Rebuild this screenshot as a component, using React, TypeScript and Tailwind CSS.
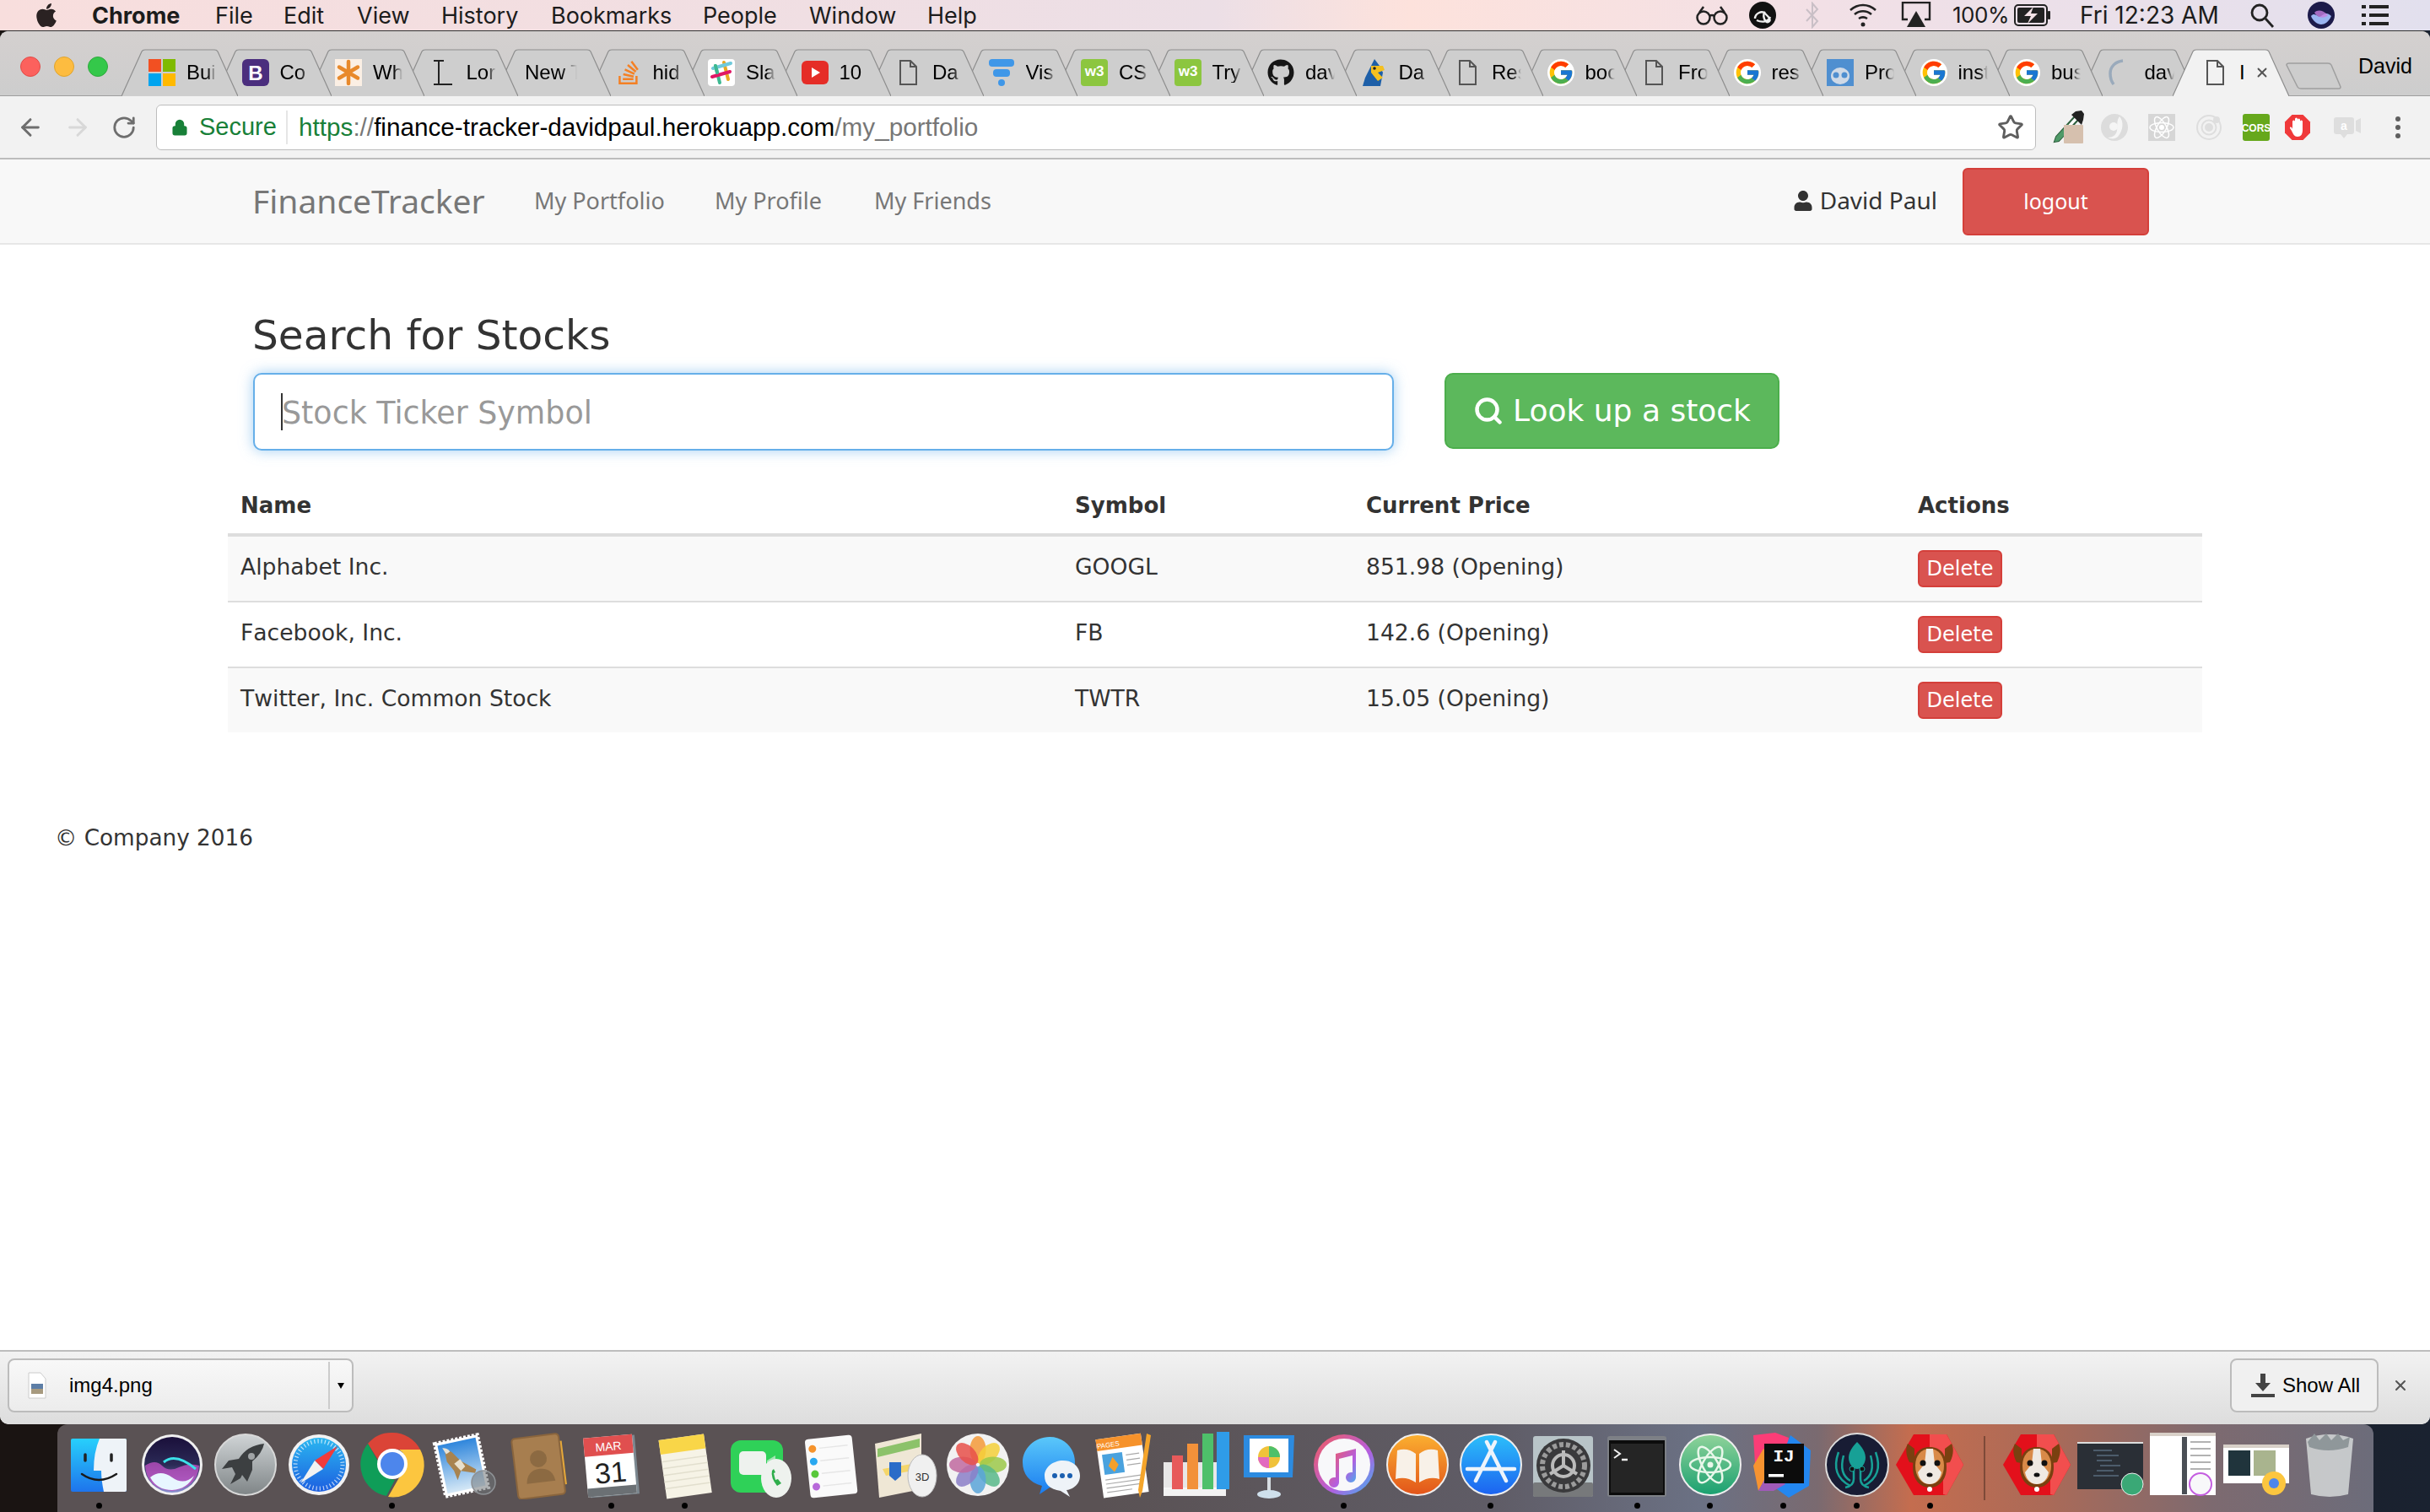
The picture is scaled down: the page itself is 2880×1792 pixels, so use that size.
import { Fragment, type ReactNode } from 'react';
import { ArrowLeft, ArrowRight, Lock, RotateCw, Search, Star, X } from 'lucide-react';
import { FaApple, FaGithub, FaStackOverflow, FaUser } from 'react-icons/fa';
import { FcGoogle } from 'react-icons/fc';

const sans = "[font-family:'Liberation_Sans',Arial,sans-serif]";
const page = "[font-family:'DejaVu_Sans',Verdana,sans-serif]";

const menus = [
  { label: 'File', cls: 'ml-[38px] w-[43px]' },
  { label: 'Edit', cls: 'ml-[38px] w-[49px]' },
  { label: 'View', cls: 'ml-[38px] w-[62px]' },
  { label: 'History', cls: 'ml-[38px] w-[92px]' },
  { label: 'Bookmarks', cls: 'ml-[38px] w-[142px]' },
  { label: 'People', cls: 'ml-[38px] w-[88px]' },
  { label: 'Window', cls: 'ml-[38px] w-[102px]' },
  { label: 'Help', cls: 'ml-[38px] w-[58px]' },
];

function MenuBar() {
  return (
    <div className="flex h-[36px] shrink-0 items-center bg-[linear-gradient(90deg,#f8dedd_0%,#ecdfe6_50%,#fde2dc_58%,#f2e0e6_75%,#e2e0ee_100%)] text-[#1c1c1c] text-[27px] leading-none [font-family:Inter,sans-serif]">
      <FaApple className="ml-[41px] h-[32px] w-[28px] text-[#2a2222]" />
      <span className="ml-[40px] w-[108px] font-bold whitespace-nowrap">Chrome</span>
      {menus.map((m) => (
        <span key={m.label} className={`${m.cls} whitespace-nowrap`}>{m.label}</span>
      ))}
      <div className="ml-auto mr-[49px] flex items-center">
        <svg width="38" height="24" viewBox="0 0 38 24" fill="none" stroke="#222" strokeWidth="2.5">
          <circle cx="9" cy="15" r="7.5" />
          <circle cx="29" cy="15" r="7.5" />
          <path d="M16 13q3-2 6 0M4 9 9 2M34 9 29 2" />
        </svg>
        <svg className="ml-[22px]" width="38" height="32" viewBox="0 0 38 32">
          <circle cx="19" cy="16" r="16" fill="#111" />
          <path d="M10 20c0-6 8-10 12-6s8 8 4 10-8-8-4-12M12 22c6 3 14 2 16-4" fill="none" stroke="#eee" strokeWidth="2.4" />
        </svg>
        <svg className="ml-[30px]" width="20" height="32" viewBox="0 0 20 32" fill="none" stroke="#c9bfc6" strokeWidth="2">
          <path d="M3 9l13 14-6 7V2l6 7L3 23" />
        </svg>
        <svg className="ml-[32px]" width="36" height="30" viewBox="0 0 36 30" fill="none" stroke="#222" strokeWidth="2.6">
          <path d="M3 9c9-8 21-8 30 0M8 14c6-5 14-5 20 0M13 19c3-2 7-2 10 0" />
          <circle cx="18" cy="26" r="2.5" fill="#222" stroke="none" />
        </svg>
        <svg className="ml-[27px]" width="36" height="32" viewBox="0 0 36 32">
          <path d="M8 21H2V1h32v20h-6" fill="none" stroke="#222" strokeWidth="2.4" />
          <path d="M18 11l11 19H7z" fill="#222" />
        </svg>
        <span className="ml-[25px] w-[62px] text-[26px] whitespace-nowrap tracking-[-0.5px]">100%</span>
        <svg className="ml-[11px]" width="44" height="26" viewBox="0 0 44 26">
          <rect x="1" y="1" width="38" height="24" rx="4" fill="none" stroke="#222" strokeWidth="2" />
          <rect x="4" y="4" width="32" height="18" rx="2" fill="#222" />
          <rect x="40" y="8" width="3" height="10" rx="1" fill="#222" />
          <path d="M23 3 12 14h8l-4 9 12-12h-8z" fill="#f3e2e6" />
        </svg>
        <span className="ml-[34px] w-[161px] text-[28px] whitespace-nowrap">Fri 12:23 AM</span>
        <svg className="ml-[40px]" width="30" height="30" viewBox="0 0 30 30" fill="none" stroke="#222" strokeWidth="2.8">
          <circle cx="12" cy="12" r="9" />
          <path d="M19 19l9 10" />
        </svg>
        <svg className="ml-[39px]" width="32" height="32" viewBox="0 0 32 32">
          <circle cx="16" cy="16" r="16" fill="#1c1a4a" />
          <path d="M4 17c5-6 8 3 12 0s7-5 12 0c-3 7-8 10-12 10S6 23 4 17z" fill="#9ab4f0" />
          <path d="M8 13c4-4 10-3 16 3-4 4-12 4-16-3z" fill="#c77fe0" opacity=".8" />
        </svg>
        <div className="ml-[32px] flex w-[32px] flex-col gap-[6px]">
          {[0, 1, 2].map((i) => (
            <div key={i} className="flex gap-[4px]">
              <div className="h-[4px] w-[5px] bg-[#222]" />
              <div className="h-[4px] flex-1 bg-[#222]" />
            </div>
          ))}
        </div>
      </div>
    </div>
  );
}

function DocIcon() {
  return (
    <svg width="21" height="30" viewBox="0 0 21 30" fill="none" stroke="#555" strokeWidth="2">
      <path d="M1 1h12l7 7v21H1zM13 1v7h7" />
    </svg>
  );
}

function W3Icon() {
  return (
    <svg width="32" height="32" viewBox="0 0 32 32">
      <rect width="32" height="32" rx="4" fill="#8cc63f" />
      <text x="16" y="20" textAnchor="middle" fontSize="17" fontWeight="700" fill="#fff" fontFamily="Liberation Sans">w3</text>
    </svg>
  );
}

const tabs: { label: string; icon?: ReactNode; wide?: boolean }[] = [
  {
    label: 'Bui',
    icon: (
      <svg width="32" height="32" viewBox="0 0 32 32">
        <rect width="15" height="15" fill="#f25022" />
        <rect x="17" width="15" height="15" fill="#7fba00" />
        <rect y="17" width="15" height="15" fill="#00a4ef" />
        <rect x="17" y="17" width="15" height="15" fill="#ffb900" />
      </svg>
    ),
  },
  {
    label: 'Co',
    icon: (
      <svg width="32" height="32" viewBox="0 0 32 32">
        <rect width="32" height="32" rx="6" fill="#4b2e7e" />
        <text x="16" y="25" textAnchor="middle" fontSize="24" fontWeight="700" fill="#fff" fontFamily="Liberation Sans">B</text>
      </svg>
    ),
  },
  {
    label: 'Wh',
    icon: (
      <svg width="32" height="32" viewBox="0 0 32 32">
        <rect width="32" height="32" fill="#fbefe4" />
        <path d="M16 3v26M5 9.500l22 13M27 9.500l-22 13" stroke="#e8892b" strokeWidth="4.500" strokeLinecap="round" />
      </svg>
    ),
  },
  {
    label: 'Lor',
    icon: (
      <svg width="32" height="32" viewBox="0 0 32 32" fill="none" stroke="#222" strokeWidth="2">
        <path d="M6 2h12M12 2v28M6 30h22" />
      </svg>
    ),
  },
  { label: 'New T', wide: true },
  { label: 'hid', icon: <FaStackOverflow className="h-[32px] w-[32px] text-[#f48024]" /> },
  {
    label: 'Sla',
    icon: (
      <svg width="32" height="32" viewBox="0 0 32 32">
        <rect width="32" height="32" rx="4" fill="#fff" />
        <g strokeWidth="4" strokeLinecap="round">
          <path d="M19 4l5 20" stroke="#e9a820" />
          <path d="M9 8l5 20" stroke="#3eb991" />
          <path d="M5 21l21-6" stroke="#e01765" />
          <path d="M6 11l21-6" stroke="#70cadb" />
          <path d="M9 8l2 8" stroke="#3eb991" />
        </g>
      </svg>
    ),
  },
  {
    label: '10',
    icon: (
      <svg width="32" height="32" viewBox="0 0 32 32">
        <rect y="2" width="32" height="28" rx="6" fill="#e52d27" />
        <path d="M12 10l10 6-10 6z" fill="#fff" />
      </svg>
    ),
  },
  { label: 'Da', icon: <DocIcon /> },
  {
    label: 'Vis',
    icon: (
      <svg width="32" height="32" viewBox="0 0 32 32" fill="#3f97e8">
        <rect x="1" width="30" height="9" rx="4" />
        <rect x="6" y="12" width="20" height="9" rx="4" />
        <rect x="12" y="24" width="8" height="8" rx="4" />
      </svg>
    ),
  },
  { label: 'CS', icon: <W3Icon /> },
  { label: 'Try', icon: <W3Icon /> },
  { label: 'dav', icon: <FaGithub className="h-[32px] w-[32px] text-[#161616]" /> },
  {
    label: 'Da',
    icon: (
      <svg width="32" height="32" viewBox="0 0 32 32">
        <path d="M16 0l6 8 4 8-3 16H2l3-10z" fill="#1d5fa8" />
        <path d="M12 8h14l2 5-8 3 6 6-6 4-8-10z" fill="#f4c020" />
        <circle cx="16" cy="11" r="1.800" fill="#222" />
      </svg>
    ),
  },
  { label: 'Res', icon: <DocIcon /> },
  { label: 'boo', icon: <FcGoogle className="h-[32px] w-[32px] rounded-full bg-white" /> },
  { label: 'Fro', icon: <DocIcon /> },
  { label: 'res', icon: <FcGoogle className="h-[32px] w-[32px] rounded-full bg-white" /> },
  {
    label: 'Pro',
    icon: (
      <svg width="32" height="32" viewBox="0 0 32 32">
        <rect width="32" height="32" fill="#4f8fd0" />
        <ellipse cx="16" cy="20" rx="11" ry="10" fill="#cfd9e6" />
        <circle cx="11" cy="19" r="3.500" fill="#4f8fd0" />
        <circle cx="21" cy="19" r="3.500" fill="#4f8fd0" />
      </svg>
    ),
  },
  { label: 'inst', icon: <FcGoogle className="h-[32px] w-[32px] rounded-full bg-white" /> },
  { label: 'bus', icon: <FcGoogle className="h-[32px] w-[32px] rounded-full bg-white" /> },
  {
    label: 'dav',
    icon: (
      <svg width="32" height="32" viewBox="0 0 32 32" fill="none" stroke="#9aaabb" strokeWidth="3.500">
        <path d="M19 2C10 3 4 9 4 17c0 5 1 9 4 13" />
      </svg>
    ),
  },
];

function TabShape({ active }: { active?: boolean }) {
  return (
    <svg className="absolute inset-0" width="138" height="56" viewBox="0 0 138 56">
      <path d="M0 56 24 3q1-2 4-2h82q3 0 4 2l24 53z" fill={active ? '#f2f2f2' : '#cecece'} stroke="none" />
      <path d="M0 56 24 3q1-2 4-2h82q3 0 4 2l24 53" fill="none" stroke="#8e8e8e" strokeWidth="1.200" />
    </svg>
  );
}

function TabStrip() {
  return (
    <div className="relative flex h-[77px] shrink-0 bg-[linear-gradient(180deg,#d4d0cf,#cdcdcd)]">
      <div className="absolute inset-x-0 bottom-0 h-px bg-[#9e9e9e]" />
      <div className="flex w-[144px] shrink-0 items-start gap-[16px] pl-[24px] pt-[30px]">
        <div className="h-[24px] w-[24px] rounded-full border border-[#e24b47] bg-[#fc615d]" />
        <div className="h-[24px] w-[24px] rounded-full border border-[#e0a42c] bg-[#fdbc40]" />
        <div className="h-[24px] w-[24px] rounded-full border border-[#2fa93d] bg-[#34c84a]" />
      </div>
      <div className={`flex items-end pt-[21px] ${sans}`}>
        {tabs.map((t, i) => (
          <div
            key={i}
            className={`relative h-[56px] w-[138px] shrink-0 ${i > 0 ? 'ml-[-27.5px]' : ''}`}
            style={{ zIndex: 40 - i }}
          >
            <TabShape />
            <div className={`relative flex h-[44px] items-center ${t.wide ? 'pl-[36px]' : 'pl-[32px]'} pt-[12px]`}>
              {t.icon && <div className="flex w-[45px] shrink-0 justify-center pr-[13px]">{t.icon}</div>}
              <span className={`whitespace-nowrap text-[24px] leading-none text-black [mask-image:linear-gradient(to_right,black_70%,transparent)] ${t.wide ? 'w-[62px]' : 'w-[35px]'}`}>
                {t.label}
              </span>
            </div>
          </div>
        ))}
        <div className="relative z-50 ml-[-27.5px] h-[56px] w-[140px] shrink-0">
          <TabShape active />
          <div className="relative flex h-[44px] items-center pl-[40px] pt-[12px]">
            <DocIcon />
            <span className="ml-[18px] w-[6px] text-[24px] leading-none text-black">I</span>
            <X className="ml-[12px] h-[18px] w-[18px] text-[#555]" strokeWidth={2.500} />
          </div>
        </div>
      </div>
      <svg className="ml-[-6px] mt-[37px] shrink-0" width="66" height="32" viewBox="0 0 66 32">
        <path d="M1 3q0-2 3-2h46q3 0 4 2l11 26q0 2-2 2H18q-3 0-4-2z" fill="#cdcdcd" stroke="#9f9f9f" strokeWidth="1.500" />
      </svg>
      <span className={`ml-[20px] mt-[29px] text-[25px] leading-none text-black ${sans}`}>David</span>
    </div>
  );
}

function Toolbar() {
  return (
    <div className="flex h-[75px] shrink-0 items-center border-b-2 border-[#bcbcbc] bg-[#f2f2f2]">
      <ArrowLeft className="ml-[20px] h-[32px] w-[32px] text-[#6e6e6e]" strokeWidth={2.200} />
      <ArrowRight className="ml-[24px] h-[32px] w-[32px] text-[#d8d8d8]" strokeWidth={2.200} />
      <RotateCw className="ml-[24px] h-[30px] w-[30px] text-[#6e6e6e]" strokeWidth={2.200} />
      <div className={`ml-[23px] flex h-[54px] w-[2228px] items-center rounded-[6px] border border-[#bdbdbd] bg-white text-[29px] leading-none ${sans}`}>
        <Lock className="ml-[17px] h-[24px] w-[20px] fill-[#188038] text-[#188038]" strokeWidth={2.500} />
        <span className="ml-[13px] w-[90px] text-[#188038]">Secure</span>
        <div className="ml-[13px] h-[40px] w-[2px] bg-[#e6e6e6]" />
        <span className="ml-[13px] whitespace-nowrap text-[29.700px]">
          <span className="text-[#188038]">https</span>
          <span className="text-[#777]">://</span>
          <span className="text-black">finance-tracker-davidpaul.herokuapp.com</span>
          <span className="text-[#777]">/my_portfolio</span>
        </span>
        <Star className="ml-auto mr-[13px] h-[32px] w-[32px] text-[#5e5e5e]" strokeWidth={2.200} />
      </div>
      <div className="ml-[20px] flex items-center">
        <svg width="40" height="42" viewBox="0 0 40 42">
          <path d="M26 8 4 32l-2 6 5-1L30 12z" fill="#fff" stroke="#2d5f3c" strokeWidth="2" />
          <path d="M18 17 4 32l-2 6 5-1 15-15z" fill="#4f9a68" />
          <path d="M22 6l12 12 2-6 1-7-3-4-7 1z" fill="#222" />
          <rect x="13" y="18" width="23" height="22" rx="1" fill="#d6c0ae" />
        </svg>
        <svg className="ml-[17px]" width="32" height="32" viewBox="0 0 32 32">
          <circle cx="16" cy="16" r="16" fill="#dcdcdc" />
          <path d="M22 3c5 5 5 16-2 24-3 3-8 3-12 1 6 0 10-3 11-8 1-6-1-12 3-17z" fill="#f5f5f5" />
          <circle cx="15" cy="15" r="5" fill="#f5f5f5" />
        </svg>
        <svg className="ml-[24px]" width="32" height="32" viewBox="0 0 32 32" fill="none" stroke="#fff" strokeWidth="1.500">
          <rect width="32" height="32" fill="#d6d6d6" stroke="none" />
          <ellipse cx="16" cy="16" rx="14" ry="5.500" />
          <ellipse cx="16" cy="16" rx="14" ry="5.500" transform="rotate(60 16 16)" />
          <ellipse cx="16" cy="16" rx="14" ry="5.500" transform="rotate(120 16 16)" />
          <circle cx="16" cy="16" r="3" fill="#fff" stroke="none" />
        </svg>
        <svg className="ml-[24px]" width="32" height="32" viewBox="0 0 32 32" fill="none" stroke="#dedede" strokeWidth="2">
          <circle cx="16" cy="16" r="14" />
          <circle cx="16" cy="16" r="8.500" />
          <circle cx="16" cy="16" r="4" fill="#dedede" />
          <circle cx="25" cy="7" r="3" fill="#dedede" />
        </svg>
        <svg className={`ml-[24px] ${sans}`} width="32" height="32" viewBox="0 0 32 32">
          <rect width="32" height="32" rx="3" fill="#66a81c" />
          <text x="16" y="21" textAnchor="middle" fontSize="12" fontWeight="700" fill="#fff">CORS</text>
        </svg>
        <svg className="ml-[17px]" width="32" height="32" viewBox="0 0 32 32">
          <path d="M9.500 1h13L31 9.500v13L22.500 31h-13L1 22.500v-13z" fill="#f0393a" />
          <path d="M10 17V9a1.500 1.500 0 0 1 3 0V6a1.500 1.500 0 0 1 3 0v1a1.500 1.500 0 0 1 3 0v2a1.500 1.500 0 0 1 3 0v10c0 5-2 8-6 8s-5-3-7-7l-2-3c0-2 2-2 3 1z" fill="#fff" />
        </svg>
        <svg className="ml-[27px]" width="32" height="32" viewBox="0 0 32 32">
          <rect y="4" width="24" height="20" rx="3" fill="#dedede" />
          <path d="M26 8l6-3v18l-6-3zM8 24h8l-4 5z" fill="#dedede" />
          <text x="12" y="19" textAnchor="middle" fontSize="14" fontWeight="700" fill="#fff" fontFamily="Liberation Sans">a</text>
        </svg>
        <div className="ml-[41px] flex w-[6px] flex-col gap-[4px]">
          <div className="h-[6px] w-[6px] rounded-full bg-[#5f5f5f]" />
          <div className="h-[6px] w-[6px] rounded-full bg-[#5f5f5f]" />
          <div className="h-[6px] w-[6px] rounded-full bg-[#5f5f5f]" />
        </div>
      </div>
    </div>
  );
}

function SiteNav() {
  return (
    <div className="flex h-[101px] shrink-0 items-center border-b-2 border-[#e7e7e7] bg-[#f8f8f8] pl-[299px] pr-[333px] text-[27px] leading-none text-[#777]">
      <span className="mb-[2px] w-[334px] text-[39px]">FinanceTracker</span>
      <span className="mb-[3px] w-[214px]">My Portfolio</span>
      <span className="mb-[3px] w-[189px]">My Profile</span>
      <span className="mb-[3px]">My Friends</span>
      <div className="ml-auto flex items-center text-[28px] text-[#333]">
        <FaUser className="mb-[2px] h-[24px] w-[22px] text-[#333]" />
        <span className="ml-[9px] mb-[4px]">David Paul</span>
        <button className="ml-[30px] h-[80px] w-[221px] rounded-[6px] border-2 border-[#d43f3a] bg-[#d9534f] text-[25px] text-white">logout</button>
      </div>
    </div>
  );
}

const stocks = [
  { name: 'Alphabet Inc.', symbol: 'GOOGL', price: '851.98 (Opening)', bg: 'bg-[#f9f9f9]' },
  { name: 'Facebook, Inc.', symbol: 'FB', price: '142.6 (Opening)', bg: 'bg-white' },
  { name: 'Twitter, Inc. Common Stock', symbol: 'TWTR', price: '15.05 (Opening)', bg: 'bg-[#f9f9f9]' },
];

function Portfolio() {
  return (
    <div className={`flex flex-1 flex-col bg-white pl-[270px] text-[26.600px] leading-[40px] text-[#333] ${page}`}>
      <h1 className="ml-[29px] mt-[82px] text-[48.600px] leading-[50px]">Search for Stocks</h1>
      <div className="mt-[20px] ml-[30px] flex items-start">
        <div className="relative h-[92px] w-[1352px]">
          <input
            placeholder="Stock Ticker Symbol"
            className="h-full w-full rounded-[10px] border-2 border-[#66afe9] bg-white pl-[32px] pt-[2px] text-[36.400px] text-[#555] shadow-[0_0_16px_rgba(102,175,233,0.6)] outline-none placeholder:text-[#999]"
          />
          <div className="absolute left-[33px] top-[24px] h-[44px] w-[2px] bg-[#333]" />
        </div>
        <button className="ml-[60px] flex h-[90px] w-[397px] items-center justify-center gap-[11px] rounded-[10px] border-2 border-[#4cae4c] bg-[#5cb85c] text-[36px] text-white">
          <Search className="h-[36px] w-[36px]" strokeWidth={3} />
          Look up a stock
        </button>
      </div>
      <table className="mt-[26px] w-[2340px] table-fixed border-collapse text-left">
        <colgroup>
          <col className="w-[989px]" />
          <col className="w-[345px]" />
          <col className="w-[654px]" />
          <col className="w-[352px]" />
        </colgroup>
        <thead>
          <tr className="border-b-4 border-[#ddd] text-[26px]">
            <th className="pb-[13px] pl-[15px] pr-[16px] pt-[19px] font-bold">Name</th>
            <th className="pb-[13px] pl-[15px] pr-[16px] pt-[19px] font-bold">Symbol</th>
            <th className="pb-[13px] pl-[15px] pr-[16px] pt-[19px] font-bold">Current Price</th>
            <th className="pb-[13px] pl-[15px] pr-[16px] pt-[19px] font-bold">Actions</th>
          </tr>
        </thead>
        <tbody className="[font-kerning:none]">
          {stocks.map((s, i) => (
            <tr key={s.symbol} className={`${s.bg} ${i < 2 ? 'border-b-2 border-[#ddd]' : ''}`}>
              <td className="py-[16px] pl-[15px] pr-[16px] align-top">{s.name}</td>
              <td className="py-[16px] pl-[15px] pr-[16px] align-top">{s.symbol}</td>
              <td className="py-[16px] pl-[15px] pr-[16px] align-top">{s.price}</td>
              <td className="py-[16px] pl-[15px] pr-[16px] align-top">
                <button className="block h-[44px] w-[100px] rounded-[6px] border-2 border-[#d43f3a] bg-[#d9534f] text-[24px] leading-none text-white">Delete</button>
              </td>
            </tr>
          ))}
        </tbody>
      </table>
      <p className="ml-[-205px] mt-[105px] text-[26.300px]">© Company 2016</p>
    </div>
  );
}

function DownloadBar() {
  return (
    <div className={`flex h-[88px] shrink-0 items-start rounded-b-[10px] border-t-2 border-[#bdbdbd] bg-[linear-gradient(180deg,#f2f2f2,#dddddd)] pt-[8px] text-black ${sans}`}>
      <div className="ml-[9px] flex h-[64px] w-[410px] items-center rounded-[8px] border-2 border-[#bcbcbc] bg-[linear-gradient(180deg,#f8f8f8,#ececec)]">
        <svg className="ml-[22px]" width="22" height="32" viewBox="0 0 22 32">
          <path d="M1 1h14l6 7v23H1z" fill="#fff" stroke="#ccc" />
          <rect x="4" y="14" width="14" height="12" fill="#5d7ea6" />
          <rect x="4" y="20" width="14" height="6" fill="#a79a7f" />
        </svg>
        <span className="ml-[27px] text-[24px] leading-none">img4.png</span>
        <div className="ml-auto flex h-[56px] items-center border-l-2 border-[#ccc] pl-[9px] pr-[9px]">
          <div className="h-0 w-0 border-x-[4px] border-t-[7px] border-x-transparent border-t-black" />
        </div>
      </div>
      <div className="ml-auto flex h-[64px] w-[176px] items-center rounded-[8px] border-2 border-[#bcbcbc] bg-[#f0f0f0]">
        <svg className="ml-[23px]" width="28" height="28" viewBox="0 0 28 28" fill="#444">
          <path d="M11 0h6v11h6l-9 10-9-10h6zM0 24h28v4H0z" />
        </svg>
        <span className="ml-[9px] whitespace-nowrap text-[24px] leading-none">Show All</span>
      </div>
      <X className="ml-[16px] mr-[25px] mt-[22px] h-[20px] w-[20px] text-[#555]" strokeWidth={2.500} />
    </div>
  );
}

/* dock icons, all drawn in an 80x80 box */
function Ic({ children }: { children: ReactNode }) {
  return <svg width="80" height="80" viewBox="0 0 80 80">{children}</svg>;
}

const dockApps: { name: string; running?: boolean; icon: ReactNode }[] = [
  {
    name: 'finder',
    running: true,
    icon: (
      <Ic>
        <defs>
          <linearGradient id="fnd" x1="0" y1="0" x2="0" y2="1">
            <stop offset="0" stopColor="#27d0fc" />
            <stop offset="1" stopColor="#1e74ec" />
          </linearGradient>
        </defs>
        <rect x="7" y="8" width="66" height="63" rx="2" fill="url(#fnd)" />
        <path d="M41 8h30q2 0 2 2v59q0 2-2 2H46q-3-14-3-25H34Q34 24 41 8z" fill="#eef3f8" />
        <path d="M24 27v7M55 27v7" stroke="#222" strokeWidth="3.500" strokeLinecap="round" />
        <path d="M20 50q20 14 41 0" fill="none" stroke="#1a1a1a" strokeWidth="2.500" strokeLinecap="round" />
      </Ic>
    ),
  },
  {
    name: 'siri',
    icon: (
      <Ic>
        <defs>
          <linearGradient id="sir" x1="0" y1="0" x2="0" y2="1">
            <stop offset="0" stopColor="#1a0f3a" />
            <stop offset=".5" stopColor="#2b2a56" />
            <stop offset="1" stopColor="#8a90d0" />
          </linearGradient>
        </defs>
        <circle cx="40" cy="39" r="36" fill="#f0f0f0" />
        <circle cx="40" cy="39" r="33" fill="url(#sir)" />
        <path d="M8 40q12-8 20 0t20 2 24-2q-2 26-32 30Q10 68 8 40z" fill="#c653c8" opacity=".75" />
        <path d="M14 54q12-10 26 0t26-2q-8 16-26 17-18 0-26-15z" fill="#e8f6ff" />
        <path d="M30 36q14-12 38 8" fill="none" stroke="#3ce0e8" strokeWidth="3" />
      </Ic>
    ),
  },
  {
    name: 'launchpad',
    icon: (
      <Ic>
        <defs>
          <linearGradient id="lpd" x1="0" y1="0" x2="0" y2="1">
            <stop offset="0" stopColor="#d0d4d6" />
            <stop offset="1" stopColor="#7f8587" />
          </linearGradient>
        </defs>
        <circle cx="40" cy="39" r="36" fill="url(#lpd)" stroke="#d8d8d8" strokeWidth="2" />
        <path d="M62 14q-20 2-30 18l-12 2-8 10 12-2 4 8-6 12 12-7 2-4 6 8 6-14 0-10q12-10 14-21z" fill="#3c3f41" />
        <circle cx="47" cy="29" r="4" fill="#a0a4a6" />
      </Ic>
    ),
  },
  {
    name: 'safari',
    icon: (
      <Ic>
        <defs>
          <linearGradient id="saf" x1="0" y1="0" x2="0" y2="1">
            <stop offset="0" stopColor="#2bb6f0" />
            <stop offset="1" stopColor="#1c5fe0" />
          </linearGradient>
        </defs>
        <circle cx="40" cy="39" r="36" fill="#f2f2f2" />
        <circle cx="40" cy="39" r="32" fill="url(#saf)" />
        <circle cx="40" cy="39" r="28" fill="none" stroke="#fff" strokeWidth="5" strokeDasharray="1.200 3" opacity=".7" />
        <path d="M62 17 45 44 35 34z" fill="#f03b3b" />
        <path d="M18 61 45 44 35 34z" fill="#f2f2f2" />
      </Ic>
    ),
  },
  {
    name: 'chrome',
    running: true,
    icon: (
      <Ic>
        <path d="M40 1a37 38 0 0 1 33 20H40a18 18 0 0 0-17 12L11 14A37 38 0 0 1 40 1z" fill="#db4437" />
        <path d="M11 14l17 30a18 18 0 0 0 15 13L33 76A37 38 0 0 1 11 14z" fill="#0f9d58" />
        <path d="M73 21a37 38 0 0 1-38 56l16-28a18 18 0 0 0-3-28z" fill="#fcc63f" />
        <circle cx="40" cy="38" r="18" fill="#fff" />
        <circle cx="40" cy="38" r="14" fill="#4d86ec" />
      </Ic>
    ),
  },
  {
    name: 'mail',
    icon: (
      <Ic>
        <defs>
          <linearGradient id="sky" x1="0" y1="0" x2="0" y2="1">
            <stop offset="0" stopColor="#2f86dc" />
            <stop offset="1" stopColor="#d5e8f6" />
          </linearGradient>
        </defs>
        <g transform="rotate(-12 36 40)">
          <rect x="10" y="8" width="52" height="64" fill="#fff" stroke="#fff" strokeWidth="4" strokeDasharray="3 2" />
          <rect x="13" y="11" width="46" height="58" fill="url(#sky)" />
          <path d="M20 16l8 6 8 12 16 14-2 4-16-6-6 10-2-12-6-12z" fill="#a8834f" />
          <path d="M18 15q6 1 8 6l-5 2z" fill="#e6e2d6" />
          <path d="M28 36l8-4 4 10-6 4z" fill="#e8e0cc" />
        </g>
        <circle cx="62" cy="60" r="14" fill="#6f7478" fillOpacity=".55" stroke="#8e9296" strokeWidth="1.500" />
      </Ic>
    ),
  },
  {
    name: 'contacts',
    icon: (
      <Ic>
        <g transform="rotate(-7 40 40)">
          <rect x="66" y="14" width="5" height="52" fill="#e5a83a" />
          <rect x="12" y="5" width="56" height="72" rx="4" fill="#a77e4f" stroke="#8a653d" strokeWidth="2" />
          <circle cx="41" cy="32" r="10" fill="#8c6a42" />
          <path d="M24 60q2-16 17-16t17 16z" fill="#8c6a42" />
        </g>
      </Ic>
    ),
  },
  {
    name: 'calendar',
    running: true,
    icon: (
      <Ic>
        <g transform="rotate(-5 40 40)">
          <rect x="12" y="6" width="58" height="70" fill="#7c8890" />
          <rect x="9" y="5" width="58" height="70" fill="#fff" />
          <rect x="9" y="5" width="58" height="22" fill="#e04f4f" />
          <rect x="9" y="65" width="58" height="10" fill="#6b7074" />
          <text x="38" y="22" textAnchor="middle" fontSize="14" fill="#fff" fontFamily="Liberation Sans">MAR</text>
          <text x="38" y="60" textAnchor="middle" fontSize="34" fill="#222" fontFamily="Liberation Sans">31</text>
        </g>
      </Ic>
    ),
  },
  {
    name: 'notes',
    running: true,
    icon: (
      <Ic>
        <g transform="rotate(-8 40 40)">
          <rect x="13" y="6" width="54" height="70" fill="#f6f3e6" />
          <rect x="13" y="6" width="54" height="17" fill="#f9d648" />
          <path d="M13 32h54M13 40h54M13 48h54M13 56h54M13 64h54" stroke="#e2dfce" strokeWidth="1.500" />
        </g>
      </Ic>
    ),
  },
  {
    name: 'facetime',
    icon: (
      <Ic>
        <rect x="7" y="10" width="62" height="62" rx="12" fill="#2fd158" />
        <rect x="17" y="23" width="32" height="28" rx="5" fill="#eef2ee" />
        <path d="M50 34l10-6v18l-10-6z" fill="#eef2ee" opacity=".6" />
        <ellipse cx="61" cy="55" rx="18" ry="23" fill="#eef2ee" />
        <path d="M56 46q-2 8 6 18l5-3-4-5-3 1-2-8 2-1-2-4z" fill="#2fae4c" />
      </Ic>
    ),
  },
  {
    name: 'reminders',
    icon: (
      <Ic>
        <g transform="rotate(-6 40 40)">
          <rect x="12" y="6" width="56" height="70" rx="4" fill="#fafafa" />
          <path d="M28 18h34M28 33h34M28 48h34M28 63h34" stroke="#e6e6e6" strokeWidth="1.500" />
          <circle cx="20" cy="18" r="4.500" fill="#f5932c" />
          <circle cx="20" cy="33" r="4.500" fill="#29a8f0" />
          <circle cx="20" cy="48" r="4.500" fill="#59c83b" />
          <circle cx="20" cy="63" r="4.500" fill="#b769d9" />
        </g>
      </Ic>
    ),
  },
  {
    name: 'maps',
    icon: (
      <Ic>
        <path d="M5 14 60 2v66L10 78z" fill="#efe7d5" />
        <path d="M8 20 58 8v10L8 30z" fill="#8cc26a" />
        <path d="M14 44l46-8v8L18 52z" fill="#f5d66a" />
        <path d="M22 36h14v16l-7 6-7-6z" fill="#2a6cc8" />
        <ellipse cx="61" cy="52" rx="17" ry="25" fill="#f0f0f0" stroke="#bbb" />
        <text x="61" y="58" textAnchor="middle" fontSize="13" fill="#333" fontFamily="Liberation Sans">3D</text>
      </Ic>
    ),
  },
  {
    name: 'photos',
    icon: (
      <Ic>
        <circle cx="40" cy="39" r="37" fill="#f2f2f2" />
        {[
          ['#f49a3a', 0], ['#f4d03a', 45], ['#9cc94a', 90], ['#58b88a', 135],
          ['#5aa4d8', 180], ['#8b7fc8', 225], ['#c16aa0', 270], ['#e8504a', 315],
        ].map(([c, a]) => (
          <ellipse key={String(a)} cx="40" cy="21" rx="9.500" ry="16" fill={String(c)} opacity=".85" transform={`rotate(${a} 40 39)`} />
        ))}
      </Ic>
    ),
  },
  {
    name: 'messages',
    icon: (
      <Ic>
        <defs>
          <linearGradient id="msg" x1="0" y1="0" x2="0" y2="1">
            <stop offset="0" stopColor="#5ac8fa" />
            <stop offset="1" stopColor="#1a7cf0" />
          </linearGradient>
        </defs>
        <path d="M38 6c18 0 30 14 30 30S56 66 38 66l-12 8 3-10C14 60 6 50 6 36 6 20 20 6 38 6z" fill="url(#msg)" />
        <path d="M54 34c12 0 20 8 20 18s-8 16-16 17l4 8-11-7C38 68 32 62 32 52c0-10 10-18 22-18z" fill="#eef3f8" />
        <circle cx="44" cy="52" r="3" fill="#1a5fb0" />
        <circle cx="53" cy="52" r="3" fill="#1a5fb0" />
        <circle cx="62" cy="52" r="3" fill="#1a5fb0" />
      </Ic>
    ),
  },
  {
    name: 'pages',
    icon: (
      <Ic>
        <g transform="rotate(-8 38 40)">
          <rect x="10" y="5" width="54" height="70" fill="#fff" />
          <rect x="10" y="5" width="54" height="14" fill="#f6922b" />
          <text x="24" y="16" textAnchor="middle" fontSize="8" fill="#fff" fontFamily="Liberation Sans">PAGES</text>
          <rect x="15" y="24" width="24" height="24" fill="#4aa2de" />
          <path d="M27 28l6 10-6 8-6-8z" fill="#f6a02b" />
          <path d="M15 54h44M15 59h44M15 64h44M15 69h30M43 28h16M43 34h16M43 40h16" stroke="#aaa" strokeWidth="1.200" />
        </g>
        <path d="M66 2l5 2-10 66-3 8-2-9z" fill="#f5a52b" />
      </Ic>
    ),
  },
  {
    name: 'numbers',
    icon: (
      <Ic>
        <path d="M0 66h74v10H0z" fill="#f2f2f2" />
        <path d="M0 36h74v32H0z" fill="#f7f7f7" opacity=".9" />
        <rect x="10" y="28" width="13" height="40" fill="#e75a5a" />
        <rect x="28" y="14" width="13" height="54" fill="#f2913a" />
        <rect x="46" y="2" width="13" height="66" fill="#4ec06a" />
        <rect x="63" y="0" width="15" height="68" fill="#2f9ce8" />
      </Ic>
    ),
  },
  {
    name: 'keynote',
    icon: (
      <Ic>
        <path d="M38 52v20" stroke="#d7dde2" strokeWidth="4" />
        <ellipse cx="38" cy="74" rx="14" ry="5" fill="#cfe0ec" />
        <path d="M8 4h60l-2 50H8z" fill="#2c8be0" />
        <rect x="15" y="8" width="46" height="40" fill="#fff" />
        <circle cx="38" cy="30" r="13" fill="#f0c23a" />
        <path d="M38 30V17a13 13 0 0 1 13 13z" fill="#4ec06a" />
        <path d="M38 30H25a13 13 0 0 0 13 13z" fill="#e26ac0" />
      </Ic>
    ),
  },
  {
    name: 'itunes',
    running: true,
    icon: (
      <Ic>
        <defs>
          <linearGradient id="itn" x1="0" y1="0" x2="1" y2="1">
            <stop offset="0" stopColor="#f45b5b" />
            <stop offset=".6" stopColor="#b45ee0" />
            <stop offset="1" stopColor="#38b8f0" />
          </linearGradient>
        </defs>
        <circle cx="40" cy="39" r="36" fill="url(#itn)" />
        <circle cx="40" cy="39" r="31" fill="#f8f8fa" />
        <path d="M30 26l24-6v34a6 6 0 1 1-6-6h2V28l-16 4v28a6 6 0 1 1-6-6h2z" fill="url(#itn)" />
      </Ic>
    ),
  },
  {
    name: 'books',
    icon: (
      <Ic>
        <defs>
          <linearGradient id="bks" x1="0" y1="0" x2="0" y2="1">
            <stop offset="0" stopColor="#fbb030" />
            <stop offset="1" stopColor="#e2541a" />
          </linearGradient>
        </defs>
        <circle cx="40" cy="39" r="36" fill="url(#bks)" stroke="#eee" strokeWidth="2" />
        <path d="M38 26q-10-8-22-4l-2 34q12-4 24 4zM42 26q10-8 22-4l2 34q-12-4-24 4z" fill="#f8f1e8" />
      </Ic>
    ),
  },
  {
    name: 'appstore',
    running: true,
    icon: (
      <Ic>
        <defs>
          <linearGradient id="aps" x1="0" y1="0" x2="0" y2="1">
            <stop offset="0" stopColor="#2cc0fa" />
            <stop offset="1" stopColor="#1c62f0" />
          </linearGradient>
        </defs>
        <circle cx="40" cy="39" r="36" fill="url(#aps)" stroke="#eee" strokeWidth="2" />
        <path d="M45 12 22 58M35 12l23 46M12 44h56" stroke="#eef4fb" strokeWidth="4.500" strokeLinecap="round" />
      </Ic>
    ),
  },
  {
    name: 'settings',
    icon: (
      <Ic>
        <rect x="4" y="5" width="71" height="72" rx="3" fill="#b8c4c8" />
        <rect x="4" y="60" width="71" height="17" rx="2" fill="#77797b" />
        <circle cx="40" cy="40" r="32" fill="#3a3a3c" />
        <circle cx="40" cy="40" r="25" fill="none" stroke="#9b9b9b" strokeWidth="6" strokeDasharray="5 3" />
        <circle cx="40" cy="40" r="13" fill="#343436" stroke="#bbb" strokeWidth="4" />
        <path d="M40 40V22M40 40l16 10M40 40 24 50" stroke="#bbb" strokeWidth="4" />
      </Ic>
    ),
  },
  {
    name: 'terminal',
    running: true,
    icon: (
      <Ic>
        <rect x="5" y="5" width="70" height="72" rx="3" fill="#7d8086" />
        <rect x="7" y="10" width="66" height="65" fill="#0c0c0c" />
        <rect x="9" y="14" width="62" height="58" fill="#252525" />
        <path d="M13 21l7 5-7 5" fill="none" stroke="#f2f2f2" strokeWidth="2" />
        <path d="M22 33h7" stroke="#f2f2f2" strokeWidth="2.500" />
      </Ic>
    ),
  },
  {
    name: 'atom',
    running: true,
    icon: (
      <Ic>
        <defs>
          <linearGradient id="atm" x1="0" y1="0" x2="0" y2="1">
            <stop offset="0" stopColor="#90d39a" />
            <stop offset="1" stopColor="#1aa070" />
          </linearGradient>
        </defs>
        <circle cx="40" cy="39" r="36" fill="url(#atm)" stroke="#eee" strokeWidth="2" />
        <g fill="none" stroke="#e8f7ea" strokeWidth="2.500">
          <ellipse cx="40" cy="39" rx="24" ry="9" transform="rotate(60 40 39)" />
          <ellipse cx="40" cy="39" rx="24" ry="9" transform="rotate(120 40 39)" />
          <ellipse cx="40" cy="39" rx="24" ry="9" />
        </g>
        <circle cx="40" cy="39" r="3.500" fill="#e8f7ea" />
      </Ic>
    ),
  },
  {
    name: 'intellij',
    running: true,
    icon: (
      <Ic>
        <path d="M4 4l26-3 16 6L42 44 6 38z" fill="#fb3d77" />
        <path d="M48 4l24 18-2 42-24 14-22-16z" fill="#2387f0" />
        <path d="M4 40l12-20 14 14-20 36z" fill="#f79330" />
        <path d="M10 70l14-26 18 18-14 8z" fill="#a05ab8" />
        <rect x="17" y="14" width="47" height="47" fill="#0c0c0c" />
        <text x="40" y="35" textAnchor="middle" fontSize="21" fontWeight="700" fill="#fff" fontFamily="Liberation Mono">IJ</text>
        <rect x="22" y="50" width="18" height="3.500" fill="#fff" />
      </Ic>
    ),
  },
  {
    name: 'gitkraken',
    running: true,
    icon: (
      <Ic>
        <circle cx="40" cy="39" r="37" fill="#181c34" stroke="#dcdcdc" strokeWidth="2" />
        <path d="M40 12c8 8 12 16 9 24-2 5-5 8-9 8s-7-3-9-8c-3-8 1-16 9-24z" fill="#17a096" />
        <g fill="none" stroke="#17a096" strokeWidth="2.500">
          <path d="M36 44v12q0 8-10 10M44 44v12q0 8 10 10" />
          <path d="M18 24q-10 28 14 40M62 24q10 28-14 40" />
          <path d="M24 28q-6 22 8 30M56 28q6 22-8 30" />
        </g>
        <circle cx="34" cy="44" r="3" fill="#111" stroke="#17a096" />
        <circle cx="46" cy="44" r="3" fill="#111" stroke="#17a096" />
      </Ic>
    ),
  },
  {
    name: 'postman-dog',
    running: true,
    icon: <DogIcon />,
  },
];

function DogIcon() {
  return (
    <Ic>
      <path d="M21 3h39l20 36-20 36H21L0 39z" fill="#e3101b" />
      <path d="M40 3h20l20 36-20 36-4-1V30H40z" fill="#f24e4e" />
      <path d="M40 18c14 0 20 10 20 24 0 14-8 24-20 24S20 56 20 42c0-14 6-24 20-24z" fill="#7a4010" />
      <path d="M40 20c10 0 17 8 17 20 0 13-7 22-17 22S23 53 23 40c0-12 7-20 17-20z" fill="#d98a48" />
      <path d="M36 20h8l2 18 8 10c-2 10-8 14-14 14s-12-4-14-14l8-10z" fill="#efe9e2" />
      <path d="M22 20 14 14c-3 6-2 14 2 22l6 1zM58 20l8-6c3 6 2 14-2 22l-6 1z" fill="#7a4010" />
      <circle cx="32" cy="37" r="3.500" fill="#111" />
      <circle cx="49" cy="37" r="3.500" fill="#111" />
      <ellipse cx="40" cy="51" rx="3.500" ry="2.500" fill="#111" />
      <circle cx="40" cy="68" r="3" fill="#fff" />
    </Ic>
  );
}

function Thumb({ children }: { children: ReactNode }) {
  return <Ic>{children}</Ic>;
}

const minimized: ReactNode[] = [
  <DogIcon key="d" />,
  <Thumb key="t1">
    <rect x="1" y="12" width="78" height="56" fill="#2a2f36" />
    <rect x="1" y="12" width="78" height="2" fill="#ddd" />
    <path d="M20 22h22M24 28h26M24 34h18M28 40h24M24 46h20M20 52h30" stroke="#6f8aa0" strokeWidth="1.200" />
    <circle cx="66" cy="62" r="13" fill="#3aa876" stroke="#eee" />
  </Thumb>,
  <Thumb key="t2">
    <rect x="0" y="1" width="78" height="74" fill="#fff" />
    <rect x="0" y="1" width="78" height="4" fill="#d8d0c8" />
    <rect x="38" y="6" width="6" height="68" fill="#4a4f55" />
    <path d="M48 12h24M48 20h24M48 28h24M48 36h24M48 44h24" stroke="#999" strokeWidth="1.500" />
    <circle cx="60" cy="62" r="13" fill="#f8f8fa" stroke="#c45ee0" strokeWidth="2" />
  </Thumb>,
  <Thumb key="t3">
    <rect x="0" y="15" width="78" height="46" fill="#fff" />
    <rect x="0" y="15" width="78" height="4" fill="#d8d0c8" />
    <rect x="6" y="22" width="26" height="30" fill="#20343c" />
    <rect x="36" y="22" width="26" height="30" fill="#a9b48e" />
    <circle cx="60" cy="61" r="14" fill="#fcc63f" />
    <circle cx="60" cy="61" r="6" fill="#4d86ec" />
  </Thumb>,
  <Thumb key="t4">
    <path d="M12 8q28-10 56 0l-6 66q-22 6-44 0z" fill="#d5d8d8" opacity=".85" />
    <path d="M14 12l8-10 6 8 8-8 6 8 8-8 6 8 8-4-2 12q-24 8-46 0z" fill="#8f979a" />
  </Thumb>,
];

function DockSlot({ icon, running, w }: { icon: ReactNode; running?: boolean; w: string }) {
  return (
    <div className={`flex shrink-0 flex-col items-center pt-[9px] ${w}`}>
      <div className="flex h-[80px] w-[80px] items-center justify-center">{icon}</div>
      {running && <div className="mt-[4px] h-[7px] w-[7px] rounded-full bg-black" />}
    </div>
  );
}

function Dock() {
  return (
    <div className="ml-[68px] flex h-[104px] w-[2745px] shrink-0 rounded-t-[12px] bg-[linear-gradient(90deg,#5a5254_0%,#5a5254_45%,#5f5c66_62%,#6b7184_71%,#7a6a70_76%,#c46d4f_80%,#aa6a58_86%,#7d6a70_93%,#6c6c7a_100%)] pl-[6px]">
      {dockApps.map((a) => (
        <Fragment key={a.name}>
          <DockSlot icon={a.icon} running={a.running} w="w-[86.8px]" />
        </Fragment>
      ))}
      <div className="ml-[20px] mr-[18px] mt-[14px] h-[76px] w-[2px] shrink-0 bg-[#7e4a38]" />
      {minimized.map((m, i) => (
        <DockSlot key={i} icon={m} w="w-[86.8px]" />
      ))}
    </div>
  );
}

export default function App() {
  return (
    <div className="flex h-[1792px] w-[2880px] flex-col overflow-hidden bg-[linear-gradient(90deg,#1a1412_0%,#1a1412_50%,#1a2230_100%)]">
      <MenuBar />
      <div className="flex h-[1652px] shrink-0 flex-col overflow-hidden rounded-[10px] border-t border-[#333] bg-white">
        <TabStrip />
        <Toolbar />
        <SiteNav />
        <Portfolio />
        <DownloadBar />
      </div>
      <Dock />
    </div>
  );
}
